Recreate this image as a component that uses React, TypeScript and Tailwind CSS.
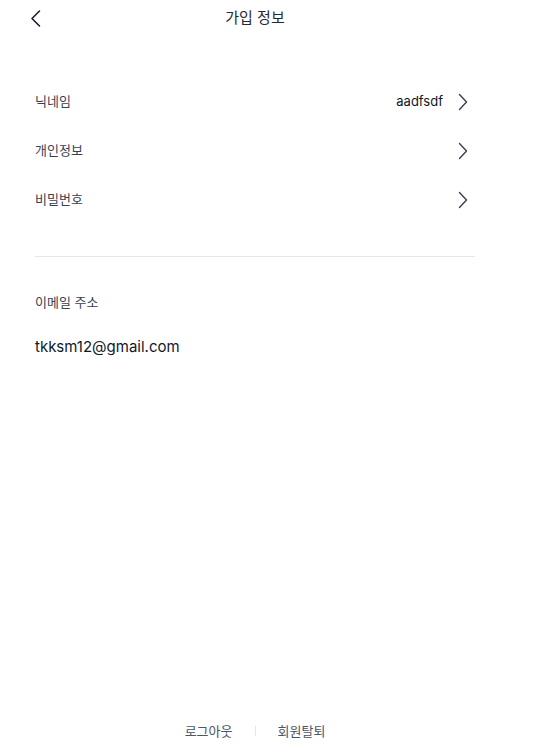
const FONT = "font-['Inter','Noto_Sans_CJK_KR',sans-serif]";

function ChevronRight() {
  return (
    <svg width="10" height="18" viewBox="0 0 10 18" fill="none" className="shrink-0">
      <path d="M1.5 1.5L8.5 9L1.5 16.5" stroke="#374151" strokeWidth="1.4" strokeLinecap="round" strokeLinejoin="round" />
    </svg>
  );
}

function ChevronLeft() {
  return (
    <svg width="11" height="17" viewBox="0 0 11 17" fill="none">
      <path d="M9.5 1L2 8.5L9.5 16" stroke="#111827" strokeWidth="1.5" strokeLinecap="round" strokeLinejoin="round" />
    </svg>
  );
}

const rows = [
  { label: "닉네임", value: "aadfsdf" },
  { label: "개인정보", value: "" },
  { label: "비밀번호", value: "" },
];

export default function App() {
  return (
    <div className={`${FONT} flex h-[752px] w-[510px] flex-col bg-white`}>
      <header className="relative flex h-9 items-center justify-center">
        <button type="button" className="absolute left-[30px] top-[10px]">
          <ChevronLeft />
        </button>
        <h1 className="text-[15px] font-normal text-[#1f2937]">가입 정보</h1>
      </header>

      <section className="mt-[41px] px-[35px]">
        {rows.map((row) => (
          <div key={row.label} className="flex h-[49px] items-center justify-between">
            <span className="text-[13px] text-[#374151]">{row.label}</span>
            <div className="flex items-center gap-[15px] pr-[7px]">
              {row.value ? <span className="text-[13px] text-[#111827]">{row.value}</span> : null}
              <ChevronRight />
            </div>
          </div>
        ))}
      </section>

      <div className="mx-[35px] mt-[32px] h-px bg-[#e5e7eb]" />

      <section className="mt-[35px] px-[35px]">
        <p className="text-[13px] leading-5 text-[#374151]">이메일 주소</p>
        <p className="mt-[23px] text-[15px] leading-6 text-[#111827]">tkksm12@gmail.com</p>
      </section>

      <footer className="mt-auto flex items-center justify-center gap-[22px] pb-[13px] text-[13px] leading-4 text-[#4b5563]">
        <button type="button">로그아웃</button>
        <span className="h-[10px] w-px bg-[#e5e7eb]" />
        <button type="button">회원탈퇴</button>
      </footer>
    </div>
  );
}
